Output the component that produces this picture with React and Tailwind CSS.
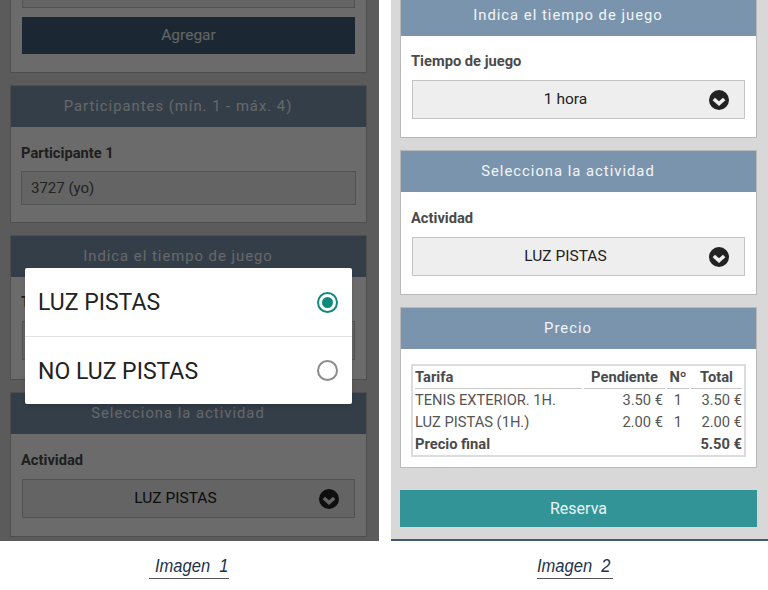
function ChevronDot({ className = "" }) {
  return (
    <svg viewBox="0 0 20 20" className={"w-[20px] h-[20px] " + className}>
      <circle cx="10" cy="10" r="10" fill="#222" />
      <path d="M4.8 9 L10 13.6 L15.2 9" fill="none" stroke="#eee" strokeWidth="3.6" />
    </svg>
  );
}

function Panel({ title, children, cut = "", bodyClass = "" }) {
  return (
    <section className={"w-[357px] shrink-0 border border-[#b9b9b9] bg-white " + cut}>
      {title && (
        <h2 className="h-[41px] pr-[21px] flex items-center justify-center bg-[#7a94ae] text-[14.8px] font-normal tracking-[1px] text-[#f2f5f7]">
          {title}
        </h2>
      )}
      <div className={bodyClass}>{children}</div>
    </section>
  );
}

function Select({ value }) {
  return (
    <div className="relative mx-[1px] h-[39px] flex items-center justify-center border border-[#c4c4c4] bg-[#eeeeee] text-[15.5px] text-[#222]">
      <span className="-ml-[26px]">{value}</span>
      <ChevronDot className="absolute right-[15px] top-[9px]" />
    </div>
  );
}

function Label({ children }) {
  return <div className="h-[20px] flex items-center text-[14.7px] font-bold text-[#4a4a4a] mb-[9px]">{children}</div>;
}

function Radio({ on }) {
  return (
    <span className={"w-[21px] h-[21px] rounded-full border-2 flex items-center justify-center " + (on ? "border-[#0f8b7c]" : "border-[#8b8b8b]")}>
      {on && <span className="w-[11px] h-[11px] rounded-full bg-[#0f8b7c]" />}
    </span>
  );
}

function Caption({ children, className = "" }) {
  return (
    <div className={"absolute top-[553px] border-b border-[#555] h-[26px] text-[19px] leading-[25px] italic text-[#24324a] [font-family:'Liberation_Sans',sans-serif] whitespace-pre " + className}>
      <span className="inline-block origin-left scale-x-[.87]">{children}</span>
    </div>
  );
}

const filas = [
  ["TENIS EXTERIOR. 1H.", "3.50 €", "1", "3.50 €"],
  ["LUZ PISTAS (1H.)", "2.00 €", "1", "2.00 €"],
];

export default function App() {
  return (
    <div className="relative w-[768px] h-[590px] overflow-hidden bg-white flex gap-[12px] [font-family:Roboto,sans-serif]">
      {/* Imagen 1 */}
      <div className="relative w-[379px] h-[541px] overflow-hidden bg-[#d8d8d8] pl-[10px] flex flex-col gap-[12px]">
        <Panel cut="-mt-[34px]" bodyClass="px-[11px] pb-[18px]">
          <div className="h-[41px] border border-[#c4c4c4] bg-[#eeeeee]" />
          <button className="mt-[9px] w-full h-[37px] bg-[#40607a] text-[15.5px] text-[#f0f0f0]">Agregar</button>
        </Panel>
        <Panel title="Participantes (mín. 1 - máx. 4)" bodyClass="px-[10px] pt-[16px] pb-[17px]">
          <Label>Participante 1</Label>
          <div className="h-[34px] -mt-[1px] flex items-center px-[9px] border border-[#c4c4c4] bg-[#eeeeee] text-[15px] text-[#555]">3727 (yo)</div>
        </Panel>
        <Panel title="Indica el tiempo de juego" bodyClass="px-[10px] pt-[15px] pb-[19px]">
          <Label>Tiempo de juego</Label>
          <Select value="1 hora" />
        </Panel>
        <Panel title="Selecciona la actividad" bodyClass="px-[10px] pt-[16px] pb-[18px]">
          <Label>Actividad</Label>
          <Select value="LUZ PISTAS" />
        </Panel>

        <div className="absolute inset-0 bg-black/[.58]" />
        <div className="absolute left-[25px] top-[268px] w-[327px] rounded-[2px] bg-white shadow-md text-[23px] text-[#222]">
          <div className="h-[69px] flex items-center justify-between pl-[13px] pr-[14px] border-b border-[#e2e2e2]">
            <span className="pt-[3px]">LUZ PISTAS</span>
            <Radio on />
          </div>
          <div className="h-[67px] flex items-center justify-between pl-[13px] pr-[14px]">
            <span className="pt-[3px]">NO LUZ PISTAS</span>
            <Radio />
          </div>
        </div>
      </div>

      {/* Imagen 2 */}
      <div className="w-[377px] h-[541px] overflow-hidden bg-[#d8d8d8] pl-[9px] border-b-2 border-[#41597f] flex flex-col gap-[12px]">
        <Panel title="Indica el tiempo de juego" cut="-mt-[6px]" bodyClass="px-[10px] pt-[15px] pb-[18px]">
          <Label>Tiempo de juego</Label>
          <Select value="1 hora" />
        </Panel>
        <Panel title="Selecciona la actividad" bodyClass="px-[10px] pt-[16px] pb-[18px]">
          <Label>Actividad</Label>
          <Select value="LUZ PISTAS" />
        </Panel>
        <Panel title="Precio" bodyClass="px-[10px] pt-[15px] pb-[10px]">
          <table className="w-[335px] table-fixed border-2 border-[#dcdcdc] border-separate border-spacing-x-[2px] border-spacing-y-0 text-[14.7px] text-[#555]">
            <colgroup>
              <col className="w-[167px]" />
              <col className="w-[81px]" />
              <col className="w-[22px]" />
              <col />
            </colgroup>
            <thead>
              <tr className="h-[22px] font-bold text-[#4a4a4a]">
                <th className="border-b border-[#c8c8c8] text-left">Tarifa</th>
                <th className="border-b border-[#c8c8c8] text-center">Pendiente</th>
                <th className="border-b border-[#c8c8c8] text-center">Nº</th>
                <th className="border-b border-[#c8c8c8] text-center">Total</th>
              </tr>
            </thead>
            <tbody>
              {filas.map((f) => (
                <tr key={f[0]} className="h-[22px]">
                  <td className="whitespace-nowrap">{f[0]}</td>
                  <td className="px-[2px] text-right">{f[1]}</td>
                  <td className="text-center">{f[2]}</td>
                  <td className="text-right">{f[3]}</td>
                </tr>
              ))}
              <tr className="h-[21px] font-bold text-[#4a4a4a]">
                <td>Precio final</td>
                <td />
                <td />
                <td className="text-right">5.50 €</td>
              </tr>
            </tbody>
          </table>
        </Panel>
        <button className="shrink-0 mt-[10px] w-[357px] h-[37px] bg-[#329496] text-[16px] text-[#e8f4f4]">Reserva</button>
      </div>

      <Caption className="left-[149px] w-[80px] pl-[6px]">Imagen  1</Caption>
      <Caption className="left-[537px] w-[76px]">Imagen  2</Caption>
    </div>
  );
}
